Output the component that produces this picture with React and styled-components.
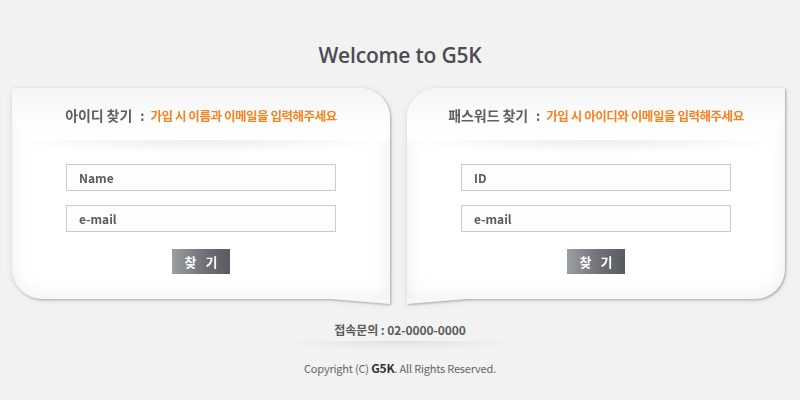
import React from "react";
import styled, { createGlobalStyle, css } from "styled-components";

const GlobalStyle = createGlobalStyle`
  html, body { margin: 0; padding: 0; background: #f2f2f2; }
  body { font-family: "Noto Sans CJK KR", "Noto Sans", sans-serif; }
  * { box-sizing: border-box; }
`;

const Page = styled.div`
  width: 800px;
  height: 400px;
  display: flex;
  flex-direction: column;
  align-items: center;
  background: #f2f2f2;
  overflow: hidden;
`;

const Title = styled.h1`
  margin: 42px 0 0;
  font-family: "Open Sans", "Noto Sans", sans-serif;
  font-weight: 600;
  font-size: 21px;
  line-height: 26px;
  color: #4c4c52;
  letter-spacing: -0.2px;
`;

const CardsRow = styled.div`
  align-self: stretch;
  display: flex;
  gap: 17px;
  padding-left: 12px;
  margin-top: 20px;
`;

const CardWrap = styled.div`
  width: 378px;
  height: 211px;
  position: relative;
  filter: drop-shadow(1px 1px 1px rgba(0, 0, 0, 0.28)) drop-shadow(0 1px 3px rgba(0, 0, 0, 0.08));
`;

const Card = styled.section`
  position: relative;
  height: 100%;
  background: #fff;
  box-shadow: inset 0 0 22px rgba(0, 0, 0, 0.07);
  border-radius: ${(p) => (p.$side === "left" ? "2px 30px 0 30px" : "30px 2px 30px 0")};
  display: flex;
  flex-direction: column;
  align-items: center;

  &::after {
    content: "";
    position: absolute;
    top: 100%;
    width: 60px;
    height: 5px;
    background: #f7f7f7;
    ${(p) =>
      p.$side === "left"
        ? css`
            right: 0;
            clip-path: polygon(0 0, 100% 0, 100% 100%);
          `
        : css`
            left: 0;
            clip-path: polygon(0 0, 100% 0, 0 100%);
          `}
  }
`;

const Header = styled.div`
  position: relative;
  align-self: stretch;
  height: 52px;
  display: flex;
  align-items: center;
  justify-content: center;
  padding-top: 2px;
  font-weight: 700;
  border-radius: inherit;
  background: linear-gradient(#f4f4f4, #fdfdfd 60%, #fff);

  &::after {
    content: "";
    position: absolute;
    left: 4%;
    right: 4%;
    top: 100%;
    height: 14px;
    background: radial-gradient(ellipse 55% 100% at 50% 0, rgba(0, 0, 0, 0.07), rgba(0, 0, 0, 0) 100%);
  }
`;

const HeadLabel = styled.span`
  color: #5f5f5f;
  font-size: 14px;
  letter-spacing: -0.1px;
`;

const Colon = styled.span`
  color: #5f5f5f;
  font-size: 13px;
  margin: 0 6px 0 8px;
`;

const Hint = styled.span`
  color: #f7821f;
  font-size: 12.5px;
  letter-spacing: -0.45px;
`;

const Form = styled.div`
  display: flex;
  flex-direction: column;
  align-items: center;
  gap: 14px;
  padding-top: 24px;
`;

const Field = styled.input`
  width: 270px;
  height: 27px;
  border: 1px solid #cccccc;
  background: #fdfdfd;
  padding: 0 0 0 12px;
  font-family: "Noto Sans CJK KR", "Noto Sans", sans-serif;
  font-size: 12px;
  font-weight: 700;
  color: #5a5a5a;
  outline: none;
  &::placeholder {
    color: #5a5a5a;
    opacity: 1;
  }
`;

const FindButton = styled.button`
  margin-top: 3px;
  width: 58px;
  height: 25px;
  border: 0;
  padding: 0;
  background: linear-gradient(90deg, #9c9fa2, #6e7276 55%, #585c60);
  color: #fff;
  font-family: "Noto Sans CJK KR", sans-serif;
  font-size: 13px;
  font-weight: 700;
  letter-spacing: 9px;
  text-indent: 9px;
  line-height: 25px;
`;

const Contact = styled.div`
  position: relative;
  margin-top: 23px;
  font-size: 12px;
  line-height: 16px;
  font-weight: 700;
  color: #5a5a5a;
  letter-spacing: -0.1px;

  &::after {
    content: "";
    position: absolute;
    left: -55px;
    right: -55px;
    top: 100%;
    margin-top: 3px;
    height: 10px;
    background: radial-gradient(ellipse 50% 100% at 50% 0, rgba(0, 0, 0, 0.07), rgba(0, 0, 0, 0) 100%);
  }
`;

const Copyright = styled.div`
  margin-top: 22px;
  font-size: 11px;
  line-height: 16px;
  color: #666;
  letter-spacing: -0.2px;
`;

const Brand = styled.b`
  font-size: 12px;
  color: #333;
`;

function FindCard({ side, label, hint, first }) {
  return (
    <CardWrap>
      <Card $side={side}>
        <Header>
          <HeadLabel>{label}</HeadLabel>
          <Colon>:</Colon>
          <Hint>{hint}</Hint>
        </Header>
        <Form>
          <Field placeholder={first} />
          <Field placeholder="e-mail" />
          <FindButton type="button">찾기</FindButton>
        </Form>
      </Card>
    </CardWrap>
  );
}

export default function App() {
  return (
    <>
      <GlobalStyle />
      <Page>
        <Title>Welcome to G5K</Title>
        <CardsRow>
          <FindCard side="left" label="아이디 찾기" hint="가입 시 이름과 이메일을 입력해주세요" first="Name" />
          <FindCard side="right" label="패스워드 찾기" hint="가입 시 아이디와 이메일을 입력해주세요" first="ID" />
        </CardsRow>
        <Contact>접속문의 : 02-0000-0000</Contact>
        <Copyright>
          Copyright (C) <Brand>G5K</Brand>. All Rights Reserved.
        </Copyright>
      </Page>
    </>
  );
}
